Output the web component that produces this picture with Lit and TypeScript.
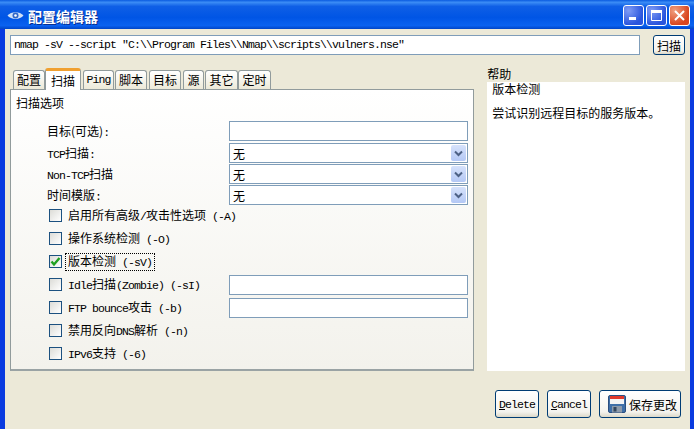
import { html, css, LitElement, svg } from 'lit';
import { customElement } from 'lit/decorators.js';
import { classMap } from 'lit/directives/class-map.js';

const chevron = svg`<svg width="9" height="7" viewBox="0 0 9 7"><path d="M1 1.5 L4.5 5 L8 1.5" fill="none" stroke="#4d6185" stroke-width="2"/></svg>`;
const check = svg`<svg width="11" height="11" viewBox="0 0 11 11"><path d="M1.5 5.5 L4 8.5 L9.5 2" fill="none" stroke="#21a121" stroke-width="2.4"/></svg>`;
const eye = svg`<svg width="17" height="11" viewBox="0 0 17 11"><path d="M0.5 5.5 C4 1 13 1 16.5 5.5 C13 10 4 10 0.5 5.5Z" fill="#cfe0f7"/><circle cx="8.5" cy="5.5" r="3" fill="#2f66c8"/><circle cx="8.5" cy="5.5" r="1.3" fill="#fff"/></svg>`;
const floppy = svg`<svg width="18" height="18" viewBox="0 0 18 18"><rect x="0.5" y="0.5" width="17" height="17" rx="1.5" fill="#3f6fa8" stroke="#2b4f80"/><rect x="2" y="1" width="14" height="3" fill="#e0392b"/><rect x="2" y="4" width="14" height="5" fill="#f4f4f4"/><rect x="4" y="11" width="10" height="6.5" fill="#8d9aaa"/><rect x="5.5" y="12" width="3" height="4.5" fill="#33465f"/></svg>`;

const tabs = [
  { label: '配置', width: 32, gap: 0 },
  { label: '扫描', width: 36, gap: 2 },
  { label: 'Ping', width: 31, gap: 1 },
  { label: '脚本', width: 32, gap: 2 },
  { label: '目标', width: 32, gap: 2 },
  { label: '源', width: 21, gap: 1 },
  { label: '其它', width: 33, gap: 0 },
  { label: '定时', width: 33, gap: 0 },
];

// latin text is 6px wide per char next to 12px han, like the old bitmap font
function mixed(s: string) {
  return s
    .split(/([\u3000-\u9fff]+)/)
    .filter((part) => part)
    .map((part) =>
      /[\u3000-\u9fff]/.test(part) ? html`<span>${part}</span>` : html`<span class="latin">${part}</span>`
    );
}

@customElement('app-root')
export class AppRoot extends LitElement {
  static styles = css`
    :host {
      display: block;
      width: 694px;
      height: 429px;
      overflow: hidden;
      font-family: "Noto Sans CJK SC", sans-serif;
      font-size: 12px;
      color: #000;
    }
    .latin {
      font-family: "Liberation Mono", monospace;
      font-size: 11.5px;
      letter-spacing: -0.9px;
      white-space: pre;
    }
    .window {
      display: flex;
      flex-direction: column;
      height: 100%;
    }
    .titlebar {
      height: 29px;
      flex: none;
      box-sizing: border-box;
      display: flex;
      align-items: center;
      padding: 2px 4px 0 7px;
      background: linear-gradient(#0a5be0 0%, #3b8cf5 8%, #0f5fe6 22%, #0055e5 60%, #0a62f0 88%, #0045c8 100%);
    }
    .title {
      margin-left: 4px;
      color: #fff;
      font-weight: 700;
      font-size: 14px;
      text-shadow: 1px 1px 0 #0a2f90;
      flex: 1;
    }
    .wbtn {
      width: 21px;
      height: 21px;
      box-sizing: border-box;
      margin-left: 2px;
      border: 1px solid #fff;
      border-radius: 3px;
      background: radial-gradient(circle at 25% 25%, #7f9cf5, #2a55dd 70%);
      display: flex;
      align-items: center;
      justify-content: center;
    }
    .wbtn.close {
      background: radial-gradient(circle at 25% 25%, #f0a080, #d9461f 70%);
    }
    .body {
      flex: 1;
      min-height: 0;
      display: flex;
      flex-direction: column;
      background: #ece9d8;
      border-left: 5px solid #0a3be0;
      border-right: 4px solid #0a3be0;
      padding: 6px 5px 0 5px;
    }
    .cmd-row {
      display: flex;
      height: 20px;
    }
    .cmd {
      width: 631px;
      height: 20px;
      box-sizing: border-box;
      border: 1px solid #7f9db9;
      background: #fff;
      padding: 0 3px;
      line-height: 18px;
    }
    .btn {
      box-sizing: border-box;
      border: 1px solid #003c74;
      border-radius: 3px;
      background: linear-gradient(#fff, #f4f3ee 80%, #dcd8c8);
      display: flex;
      align-items: center;
      justify-content: center;
      height: 28px;
    }
    .scan {
      margin-left: 13px;
      width: 32px;
      height: 20px;
    }
    .main {
      flex: none;
      height: 304px;
      display: flex;
      margin-top: 12px;
    }
    .left {
      width: 465px;
      display: flex;
      flex-direction: column;
    }
    .tabs {
      display: flex;
      align-items: flex-end;
      height: 22px;
      padding-left: 3px;
      position: relative;
      z-index: 1;
    }
    .tab {
      box-sizing: border-box;
      height: 19px;
      padding-bottom: 1px;
      border: 1px solid #919b9c;
      border-bottom: none;
      border-radius: 3px 3px 0 0;
      background: linear-gradient(#fff, #ece9d8);
      display: flex;
      align-items: center;
      justify-content: center;
      white-space: nowrap;
    }
    .tab.active {
      height: 22px;
      margin-bottom: -1px;
      background: #fff;
      border-top: 3px solid #f0a030;
    }
    .panel {
      box-sizing: border-box;
      height: 282px;
      border: 1px solid #919b9c;
      border-bottom: 2px solid #9aa3a4;
      background: linear-gradient(#fff, #f3f2ec);
      padding: 4px 5px 0 5px;
    }
    .group-title {
      height: 18px;
      line-height: 18px;
      margin-bottom: 9px;
    }
    .form {
      padding-left: 31px;
      display: flex;
      flex-direction: column;
    }
    .row {
      display: grid;
      grid-template-columns: 182px 239px;
      align-items: center;
      height: 20px;
      margin-bottom: 1px;
    }
    .row.first {
      margin-bottom: 2px;
    }
    .row-label {
      padding-bottom: 2px;
    }
    .field {
      box-sizing: border-box;
      height: 20px;
      border: 1px solid #7f9db9;
      background: #fff;
      display: flex;
      align-items: center;
      justify-content: space-between;
      padding: 0 1px 0 3px;
    }
    .arrow {
      width: 15px;
      height: 16px;
      border-radius: 2px;
      background: linear-gradient(#d6e2fb, #b4c8f5);
      display: flex;
      align-items: center;
      justify-content: center;
    }
    .checks {
      padding-left: 2px;
      margin-top: -2px;
    }
    .check-row {
      display: grid;
      grid-template-columns: 180px 239px;
      align-items: center;
      height: 23px;
    }
    .check-label {
      display: flex;
      align-items: center;
      gap: 4px;
      white-space: nowrap;
    }
    .box {
      box-sizing: border-box;
      width: 13px;
      height: 13px;
      border: 1px solid #1c5180;
      background: linear-gradient(135deg, #dcdcd7, #fff);
      display: flex;
      align-items: center;
      justify-content: center;
      flex: none;
    }
    .text {
      padding: 0 2px 2px;
      box-sizing: border-box;
      height: 16px;
      display: flex;
      align-items: center;
    }
    .text.focus {
      outline: 1px dotted #000;
    }
    .help {
      margin-left: 13px;
      width: 198px;
      display: flex;
      flex-direction: column;
    }
    .help-label {
      height: 15px;
      line-height: 13px;
    }
    .help-box {
      box-sizing: border-box;
      height: 289px;
      background: #fff;
      padding: 0 5px;
      line-height: 13px;
    }
    .help-box div:first-child {
      margin-bottom: 11px;
    }
    .actions {
      display: flex;
      justify-content: flex-end;
      gap: 8px;
      margin-top: 19px;
      padding-right: 4px;
    }
    .act {
      width: 44px;
    }
    .save {
      width: 82px;
      gap: 3px;
      justify-content: flex-start;
      padding-left: 8px;
    }
  `;

  private renderCheck(label: string, checked = false, field = false) {
    return html`
      <div class="check-row">
        <div class="check-label">
          <span class="box">${checked ? check : ''}</span>
          <span class=${classMap({ text: true, focus: checked })}><span>${mixed(label)}</span></span>
        </div>
        ${field ? html`<div class="field"></div>` : ''}
      </div>
    `;
  }

  private renderCombo(label: string) {
    return html`
      <div class="row">
        <span class="row-label">${mixed(label)}</span>
        <div class="field"><span>无</span><span class="arrow">${chevron}</span></div>
      </div>
    `;
  }

  render() {
    return html`
      <div class="window">
        <div class="titlebar">
          ${eye}
          <span class="title">配置编辑器</span>
          <span class="wbtn"><svg width="9" height="9" viewBox="0 0 9 9"><rect x="0" y="6" width="7" height="3" fill="#fff"/></svg></span>
          <span class="wbtn"><svg width="11" height="11" viewBox="0 0 11 11"><path d="M0.5 2.5H10.5V10.5H0.5Z" fill="none" stroke="#fff"/><rect x="0" y="0" width="11" height="3" fill="#fff"/></svg></span>
          <span class="wbtn close"><svg width="11" height="11" viewBox="0 0 11 11"><path d="M1 1L10 10M10 1L1 10" stroke="#fff" stroke-width="2"/></svg></span>
        </div>
        <div class="body">
          <div class="cmd-row">
            <div class="cmd latin">nmap -sV --script "C:\\\\Program Files\\\\Nmap\\\\scripts\\\\vulners.nse"</div>
            <div class="btn scan">扫描</div>
          </div>
          <div class="main">
            <div class="left">
              <div class="tabs">
                ${tabs.map(
                  (t) => html`<div
                    class=${classMap({ tab: true, active: t.label === '扫描' })}
                    style="width:${t.width}px;margin-right:${t.gap}px"
                  >${mixed(t.label)}</div>`
                )}
              </div>
              <div class="panel">
                <div class="group-title">扫描选项</div>
                <div class="form">
                  <div class="row first"><span class="row-label">目标(可选)${mixed(':')}</span><div class="field"></div></div>
                  ${this.renderCombo('TCP扫描:')}
                  ${this.renderCombo('Non-TCP扫描')}
                  ${this.renderCombo('时间模版:')}
                  <div class="checks">
                    ${this.renderCheck('启用所有高级/攻击性选项 (-A)')}
                    ${this.renderCheck('操作系统检测 (-O)')}
                    ${this.renderCheck('版本检测 (-sV)', true)}
                    ${this.renderCheck('Idle扫描(Zombie) (-sI)', false, true)}
                    ${this.renderCheck('FTP bounce攻击 (-b)', false, true)}
                    ${this.renderCheck('禁用反向DNS解析 (-n)')}
                    ${this.renderCheck('IPv6支持 (-6)')}
                  </div>
                </div>
              </div>
            </div>
            <div class="help">
              <div class="help-label">帮助</div>
              <div class="help-box">
                <div>版本检测</div>
                <div>尝试识别远程目标的服务版本。</div>
              </div>
            </div>
          </div>
          <div class="actions">
            <div class="btn act"><span class="latin"><u>D</u>elete</span></div>
            <div class="btn act"><span class="latin"><u>C</u>ancel</span></div>
            <div class="btn save">${floppy}<span>保存更改</span></div>
          </div>
        </div>
      </div>
    `;
  }
}
